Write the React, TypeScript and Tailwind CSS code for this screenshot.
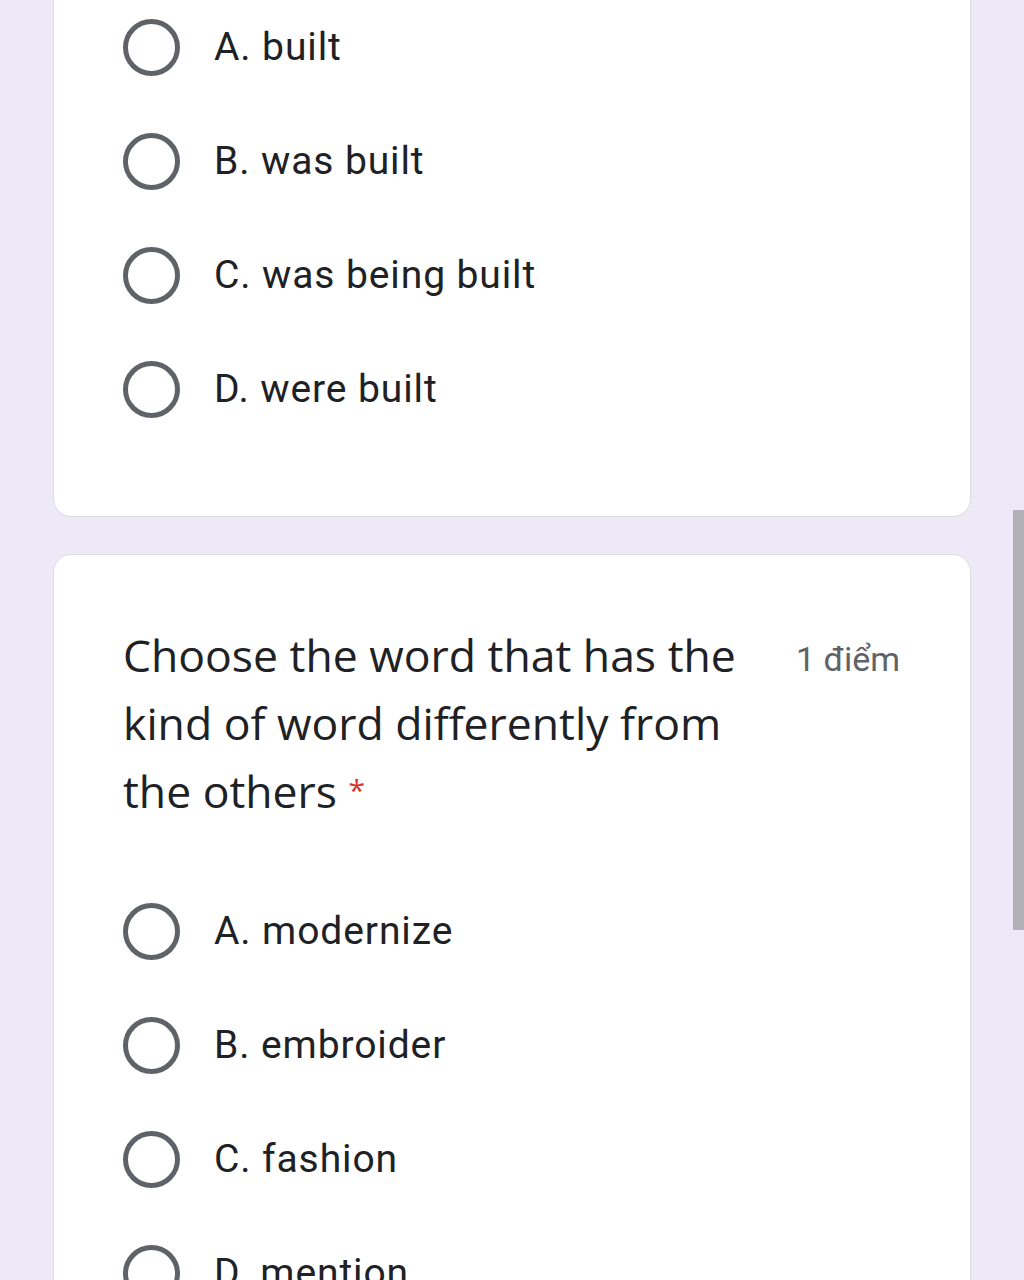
import React from 'react';

const firstOptions = ['A. built', 'B. was built', 'C. was being built', 'D. were built'];
const secondOptions = ['A. modernize', 'B. embroider', 'C. fashion', 'D. mention'];

function Radio() {
  return <div className="w-[57px] h-[57px] shrink-0 rounded-full border-[5px] border-[#5f6368]" />;
}

function OptionRow({ label }: { label: string }) {
  return (
    <div className="h-[114px] flex items-center gap-[34px]">
      <Radio />
      <span className="text-[39px] tracking-[0.9px] text-[#202124] font-['Roboto',sans-serif]">{label}</span>
    </div>
  );
}

export default function App() {
  return (
    <div className="relative h-[1280px] overflow-hidden bg-[#ede9f7] px-[53px]">
      {/* first card, scrolled past its top */}
      <div className="-mt-[10px] bg-white border border-t-0 border-[#dadce0] rounded-b-[18px] pl-[69px] pb-[70px]">
        {firstOptions.map((o) => (
          <OptionRow key={o} label={o} />
        ))}
      </div>

      {/* second card */}
      <div className="mt-[37px] bg-white border border-[#dadce0] rounded-[18px] pl-[69px] pr-[70px] pt-[66px]">
        <div className="flex items-start justify-between">
          <h2 className="w-[640px] text-[44.5px] leading-[68px] text-[#202124] font-['Open_Sans',sans-serif]">
            Choose the word that has the kind of word differently from the others{' '}
            <span className="inline-block align-top text-[30px] leading-[30px] pt-[18px] text-[#d93025]">*</span>
          </h2>
          <span className="pt-[18px] text-[34px] leading-[40px] text-[#5f6368] font-['Roboto',sans-serif]">1 điểm</span>
        </div>
        <div className="mt-[49px]">
          {secondOptions.map((o) => (
            <OptionRow key={o} label={o} />
          ))}
        </div>
      </div>

      {/* scrollbar thumb */}
      <div className="absolute right-0 top-[510px] w-[11px] h-[420px] bg-[#b3b1b8]" />
    </div>
  );
}
